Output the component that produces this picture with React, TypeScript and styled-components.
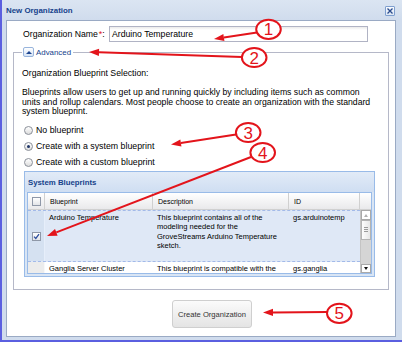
import React from "react";
import styled, { createGlobalStyle, css } from "styled-components";

const font = `"Liberation Sans", Arial, Helvetica, sans-serif`;

const GlobalStyle = createGlobalStyle`
  html, body { margin: 0; padding: 0; background: #ffffff; }
  body { font-family: ${font}; color: #000; }
  *, *::before, *::after { box-sizing: border-box; }
`;

const Stage = styled.div`
  position: relative;
  width: 402px;
  height: 342px;
  overflow: hidden;
`;

const Window = styled.div`
  height: 100%;
  display: flex;
  flex-direction: column;
  background: linear-gradient(#dbe5f2, #d0dced 20px, #d0dced);
  border-left: 2px solid #5b5fe0;
  border-bottom: 2px solid #5b5fe0;
`;

const TitleBar = styled.div`
  height: 20px;
  flex: none;
  display: flex;
  align-items: center;
  justify-content: space-between;
  padding: 1px 7px 0 4px;
`;

const Title = styled.span`
  font: bold 7.9px ${font};
  color: #15428b;
`;

const CloseButton = styled.span`
  width: 10px;
  height: 10px;
  display: flex;
  align-items: center;
  justify-content: center;
  border: 1px solid #7f9fcf;
  border-radius: 1px;
  background: linear-gradient(#f7faff, #dce6f4);
`;

const Body = styled.div`
  flex: 1;
  margin: 0 6px 3px 4px;
  background: #fff;
  border: 1px solid #9aaac4;
  padding: 5px 6px 8px;
  display: flex;
  flex-direction: column;
`;

const FormRow = styled.div`
  height: 16px;
  display: flex;
  align-items: center;
  padding-left: 10px;
`;

const Label = styled.label`
  width: 86px;
  flex: none;
  font-size: 8.7px;
  color: #000;
`;

const Req = styled.span`
  color: #e0161b;
  margin-left: 1px;
`;

const TextInput = styled.div`
  width: 259px;
  height: 16px;
  border: 1px solid #b0b3c4;
  background: linear-gradient(#eaeaea, #ffffff 3px);
  padding-left: 2px;
  display: flex;
  align-items: center;
  font-size: 8.7px;
  color: #000;
`;

const Fieldset = styled.fieldset`
  margin: 4px 0 0;
  padding: 10px 8px 12px;
  border: 1px solid #b5b8c8;
  min-width: 0;
`;

const Legend = styled.legend`
  display: flex;
  align-items: center;
  gap: 2px;
  height: 12px;
  padding: 0 2px 0 1px;
  font-size: 7.9px;
  color: #15428b;
`;

const Toggle = styled.span`
  width: 11px;
  height: 10px;
  display: flex;
  align-items: center;
  justify-content: center;
  border: 1px solid #98b4dc;
  border-radius: 2px;
  background: linear-gradient(#ffffff, #d6e4f6);
  &::before {
    content: "";
    border-left: 3px solid transparent;
    border-right: 3px solid transparent;
    border-bottom: 3px solid #1d4590;
  }
`;

const SectionTitle = styled.div`
  font-size: 8.7px;
  line-height: 10px;
`;

const Paragraph = styled.p`
  margin: 10px 0 0;
  font-size: 8.7px;
  line-height: 9.5px;
  white-space: nowrap;
`;

const RadioGroup = styled.div`
  margin-top: 5.5px;
  display: flex;
  flex-direction: column;
`;

const RadioRow = styled.label`
  height: 16px;
  display: flex;
  align-items: center;
  gap: 3px;
  padding-left: 2px;
  font-size: 8.8px;
`;

const Radio = styled.span<{ $checked?: boolean }>`
  position: relative;
  width: 9px;
  height: 9px;
  flex: none;
  border-radius: 50%;
  border: 1px solid #8b9099;
  background: linear-gradient(#ffffff, #dcdcdc);
  ${(p) =>
    p.$checked &&
    css`
      &::after {
        content: "";
        position: absolute;
        inset: 2px;
        border-radius: 50%;
        background: #1f3566;
      }
    `}
`;

const GridPanel = styled.div`
  margin: 1px 0 0 2px;
  width: 351px;
  border: 1px solid #99bbe8;
  background: #d9e5f4;
`;

const PanelHeader = styled.div`
  height: 20px;
  display: flex;
  align-items: center;
  padding-left: 3px;
  background: linear-gradient(#e2ebf7, #cfdef2);
  font: bold 7.8px ${font};
  color: #15428b;
`;

const PanelBody = styled.div`
  padding: 0 2px 2px;
`;

const Grid = styled.div`
  border: 1px solid #99bbe8;
  background: #fff;
`;

const HeaderRow = styled.div`
  height: 17px;
  display: flex;
  background: linear-gradient(#ffffff, #e9e9eb);
  border-bottom: 1px solid #d0d0d0;
`;

const HeaderCell = styled.div<{ $w: number; $center?: boolean }>`
  width: ${(p) => p.$w}px;
  flex: none;
  display: flex;
  align-items: center;
  justify-content: ${(p) => (p.$center ? "center" : "flex-start")};
  padding-left: ${(p) => (p.$center ? 0 : 5)}px;
  border-right: 1px solid #d0d0d0;
  font-size: 7px;
  color: #000;
`;

const GridBody = styled.div`
  height: 63px;
  display: flex;
`;

const Rows = styled.div`
  flex: 1;
  overflow: hidden;
`;

const Row = styled.div<{ $selected?: boolean; $h?: number }>`
  display: flex;
  height: ${(p) => (p.$h ? `${p.$h}px` : "auto")};
  background: ${(p) => (p.$selected ? "#dfe8f6" : "#fff")};
  ${(p) =>
    p.$selected &&
    css`
      border-top: 1px dashed #a3bae9;
      border-bottom: 1px dashed #a3bae9;
    `}
`;

const CheckerCell = styled.div<{ $selected?: boolean }>`
  width: 17px;
  flex: none;
  display: flex;
  align-items: center;
  justify-content: center;
  background: ${(p) => (p.$selected ? "#d5e1f1" : "#ececec")};
  border-right: 1px solid ${(p) => (p.$selected ? "#e6eefa" : "#f8f8f8")};
`;

const Cell = styled.div<{ $w: number }>`
  width: ${(p) => p.$w}px;
  flex: none;
  padding: 2px 4px;
  font-size: 7.5px;
  line-height: 9.3px;
  white-space: nowrap;
  overflow: hidden;
  color: #000;
`;

const Checkbox = styled.span`
  width: 9px;
  height: 9px;
  display: flex;
  align-items: center;
  justify-content: center;
  border: 1px solid #8f98a8;
  background: linear-gradient(#ffffff, #e2e4e8);
`;

const Scrollbar = styled.div`
  width: 11px;
  flex: none;
  display: flex;
  flex-direction: column;
  background: #d5d5d5;
  border-left: 1px solid #c4c4c4;
`;

const ScrollArrow = styled.div<{ $dir: "up" | "down"; $h: number }>`
  height: ${(p) => p.$h}px;
  flex: none;
  display: flex;
  align-items: center;
  justify-content: center;
  background: #fff;
  border: 1px solid #a9a9a9;
  &::before {
    content: "";
    border-left: 2.5px solid transparent;
    border-right: 2.5px solid transparent;
    ${(p) =>
      p.$dir === "up"
        ? css`
            border-bottom: 3px solid #b0b0b0;
          `
        : css`
            border-top: 3px solid #111;
          `}
  }
`;

const ScrollThumb = styled.div`
  height: 20px;
  flex: none;
  display: flex;
  align-items: center;
  justify-content: center;
  background: linear-gradient(90deg, #fdfdfd, #e6e6e6);
  border: 1px solid #b3b3b3;
  &::before {
    content: "";
    width: 4px;
    height: 6px;
    background: repeating-linear-gradient(#9a9a9a 0 1px, transparent 1px 2px);
  }
`;

const ScrollTrack = styled.div`
  flex: 1;
`;

const Footer = styled.div`
  flex: 1;
  display: flex;
  justify-content: center;
  align-items: flex-start;
  padding: 10px 0 0 22px;
`;

const Button = styled.button`
  width: 80px;
  height: 28px;
  padding: 0;
  border: 1px solid #cfcfcf;
  border-radius: 3px;
  background: linear-gradient(#fbfbfb, #e4e4e4);
  font: 7.6px ${font};
  color: #333;
`;

const Overlay = styled.svg`
  position: absolute;
  left: 0;
  top: 0;
  pointer-events: none;
`;

const RED = "#e3141b";

type ArrowProps = { x1: number; y1: number; x2: number; y2: number };

const Arrow = ({ x1, y1, x2, y2 }: ArrowProps) => {
  const a = Math.atan2(y2 - y1, x2 - x1);
  const len = 10;
  const w = 3.6;
  const bx = x2 - len * Math.cos(a);
  const by = y2 - len * Math.sin(a);
  const px = w * Math.sin(a);
  const py = -w * Math.cos(a);
  return (
    <g>
      <line x1={x1} y1={y1} x2={bx} y2={by} stroke={RED} strokeWidth={2} />
      <polygon
        points={`${x2},${y2} ${bx + px},${by + py} ${bx - px},${by - py}`}
        fill={RED}
      />
    </g>
  );
};

const Marker = ({ cx, cy, n }: { cx: number; cy: number; n: number }) => (
  <g>
    <ellipse cx={cx} cy={cy} rx={12.3} ry={9.6} fill="#fff" stroke={RED} strokeWidth={2} />
    <text
      x={cx}
      y={cy + 6}
      textAnchor="middle"
      fontFamily={font}
      fontSize={17}
      fill={RED}
    >
      {n}
    </text>
  </g>
);

const CheckMark = () => (
  <svg width="7" height="7" viewBox="0 0 7 7">
    <path d="M1 3.6 L2.8 5.4 L6 1.2" fill="none" stroke="#2d4f9e" strokeWidth="1.3" />
  </svg>
);

const CloseIcon = () => (
  <svg width="6" height="6" viewBox="0 0 6 6">
    <path d="M0.5 0.5 L5.5 5.5 M5.5 0.5 L0.5 5.5" stroke="#2a4b8c" strokeWidth="1.3" />
  </svg>
);

const cols = { check: 17, name: 108, desc: 136, id: 71 };

const App = () => {
  return (
    <Stage>
      <GlobalStyle />
      <Window>
        <TitleBar>
          <Title>New Organization</Title>
          <CloseButton>
            <CloseIcon />
          </CloseButton>
        </TitleBar>
        <Body>
          <FormRow>
            <Label>
              Organization Name<Req>*</Req>:
            </Label>
            <TextInput>Arduino Temperature</TextInput>
          </FormRow>
          <Fieldset>
            <Legend>
              <Toggle />
              Advanced
            </Legend>
            <SectionTitle>Organization Blueprint Selection:</SectionTitle>
            <Paragraph>
              Blueprints allow users to get up and running quickly by including items such as common
              <br />
              units and rollup calendars. Most people choose to create an organization with the standard
              <br />
              system blueprint.
            </Paragraph>
            <RadioGroup>
              <RadioRow>
                <Radio />
                No blueprint
              </RadioRow>
              <RadioRow>
                <Radio $checked />
                Create with a system blueprint
              </RadioRow>
              <RadioRow>
                <Radio />
                Create with a custom blueprint
              </RadioRow>
            </RadioGroup>
            <GridPanel>
              <PanelHeader>System Blueprints</PanelHeader>
              <PanelBody>
                <Grid>
                  <HeaderRow>
                    <HeaderCell $w={cols.check} $center>
                      <Checkbox />
                    </HeaderCell>
                    <HeaderCell $w={cols.name}>Blueprint</HeaderCell>
                    <HeaderCell $w={cols.desc}>Description</HeaderCell>
                    <HeaderCell $w={cols.id}>ID</HeaderCell>
                  </HeaderRow>
                  <GridBody>
                    <Rows>
                      <Row $selected $h={52}>
                        <CheckerCell $selected>
                          <Checkbox>
                            <CheckMark />
                          </Checkbox>
                        </CheckerCell>
                        <Cell $w={cols.name}>Arduino Temperature</Cell>
                        <Cell $w={cols.desc}>
                          This blueprint contains all of the
                          <br />
                          modeling needed for the
                          <br />
                          GroveStreams Arduino Temperature
                          <br />
                          sketch.
                        </Cell>
                        <Cell $w={cols.id}>gs.arduinotemp</Cell>
                      </Row>
                      <Row $h={20}>
                        <CheckerCell />
                        <Cell $w={cols.name}>Ganglia Server Cluster</Cell>
                        <Cell $w={cols.desc}>This blueprint is compatible with the</Cell>
                        <Cell $w={cols.id}>gs.ganglia</Cell>
                      </Row>
                    </Rows>
                    <Scrollbar>
                      <ScrollArrow $dir="up" $h={10} />
                      <ScrollThumb />
                      <ScrollTrack />
                      <ScrollArrow $dir="down" $h={9} />
                    </Scrollbar>
                  </GridBody>
                </Grid>
              </PanelBody>
            </GridPanel>
          </Fieldset>
          <Footer>
            <Button>Create Organization</Button>
          </Footer>
        </Body>
      </Window>
      <Overlay width={402} height={342} viewBox="0 0 402 342">
        <Arrow x1={257} y1={32.5} x2={214} y2={39} />
        <Arrow x1={242} y1={57} x2={89} y2={52} />
        <Arrow x1={236} y1={134.5} x2={171} y2={144.5} />
        <Arrow x1={251} y1={157} x2={47} y2={236} />
        <Arrow x1={327} y1={312} x2={263} y2={312.5} />
        <Marker cx={268.5} cy={29.3} n={1} />
        <Marker cx={254.2} cy={57.5} n={2} />
        <Marker cx={248.2} cy={132.5} n={3} />
        <Marker cx={262.7} cy={152.5} n={4} />
        <Marker cx={339.3} cy={313.3} n={5} />
      </Overlay>
    </Stage>
  );
};

export default App;
